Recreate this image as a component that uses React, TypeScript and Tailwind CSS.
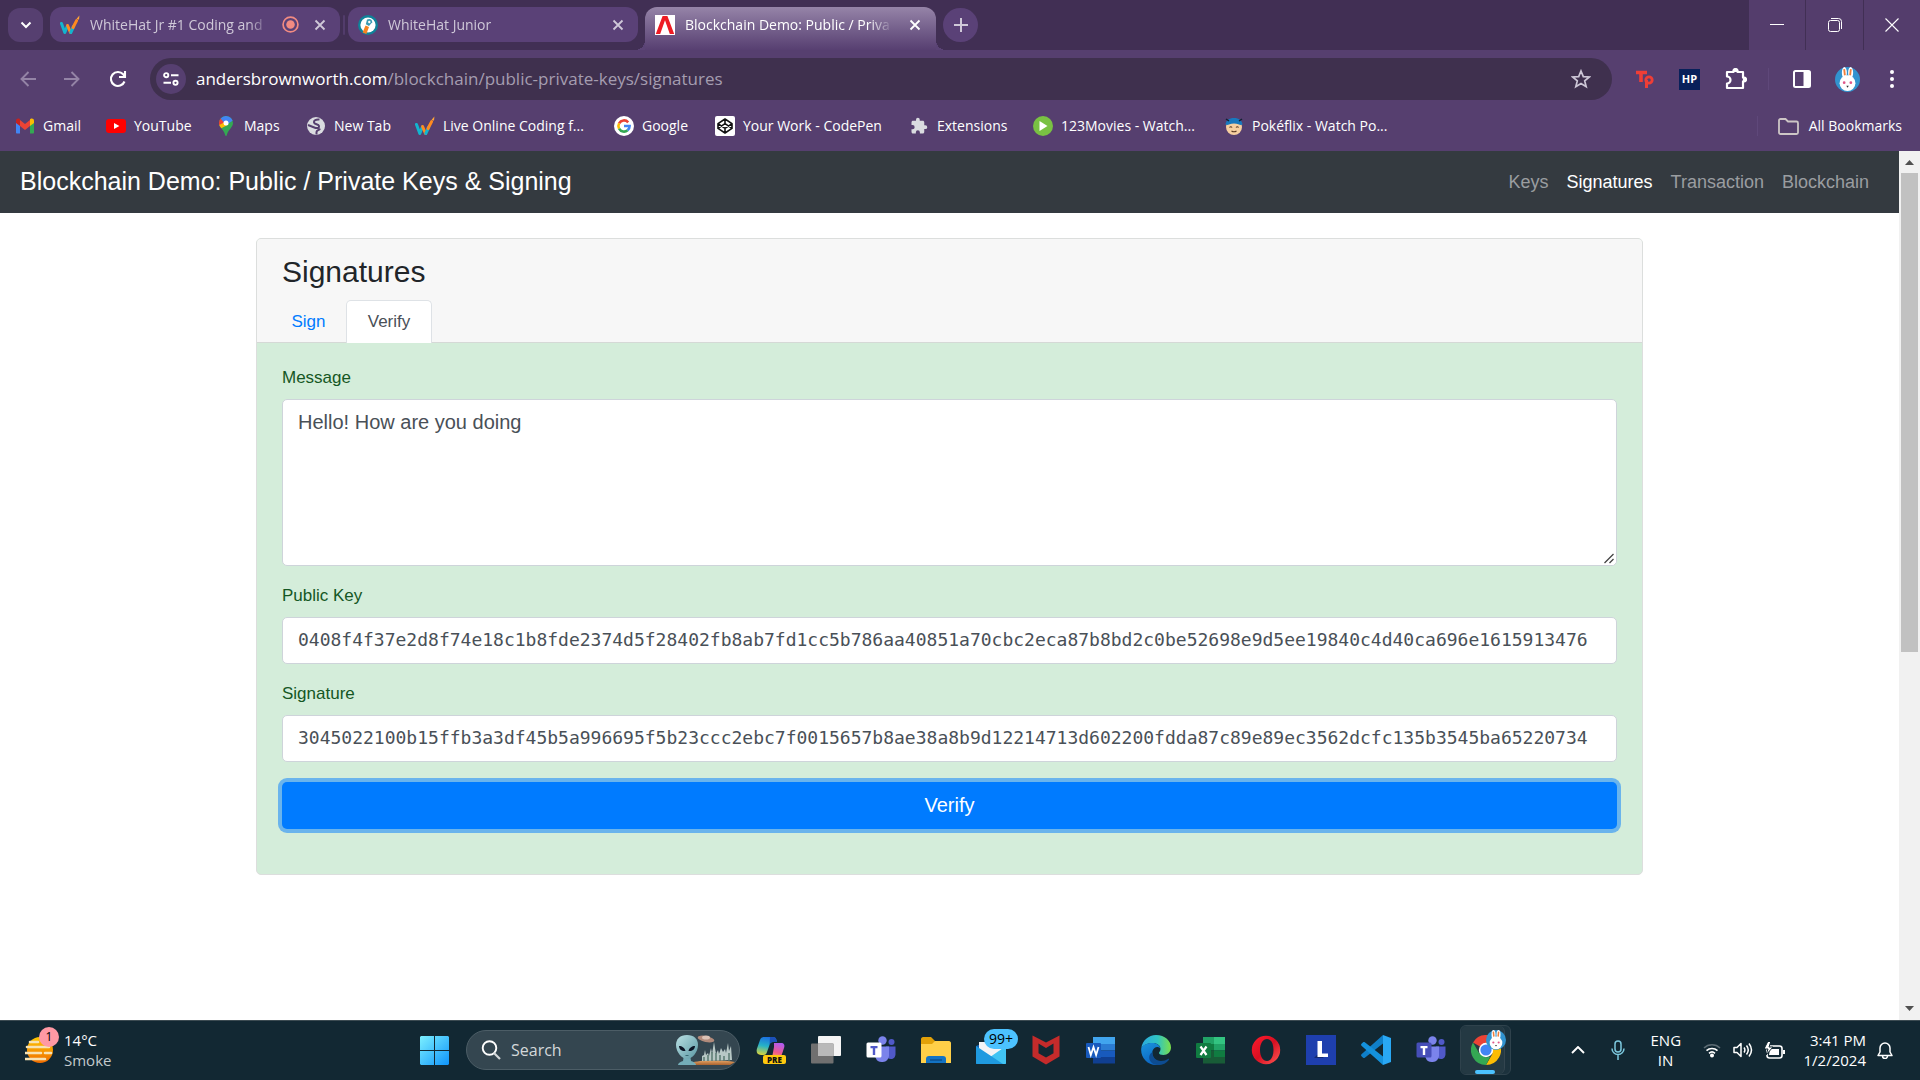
import React, { useState } from "react";

type IconProps = { className?: string };

/* ---------- Browser icons ---------- */

const WhiteHatMark = ({ className = "" }: IconProps) => (
  <svg viewBox="0 0 20 20" className={className} aria-hidden="true">
    <path d="M1.5 8.5 4.8 17.5 7.4 11" fill="none" stroke="#12b5cf" strokeWidth="3" strokeLinejoin="round" strokeLinecap="round" />
    <path d="M7.6 10.5 10.5 17.5" fill="none" stroke="#ff8a1f" strokeWidth="3" strokeLinecap="round" />
    <path d="M10.8 17.5 13.8 11" fill="none" stroke="#12b5cf" strokeWidth="3" strokeLinecap="round" />
    <path d="M13 12.5 16.6 5.6" fill="none" stroke="#ff8a1f" strokeWidth="3" strokeLinecap="round" />
    <path d="M16.6 3.8 19.4 0.4 19 4.8z" fill="#ffa53a" />
  </svg>
);

const WhiteHatRound = ({ className = "" }: IconProps) => (
  <svg viewBox="0 0 20 20" className={className} aria-hidden="true">
    <circle cx="10" cy="10" r="10" fill="#0f8299" />
    <circle cx="10" cy="10" r="7.6" fill="#fff" />
    <path d="M9 4.5c3-1.500 5.400 0 5.200 2.800L11 11 7.800 9.200z" fill="#3b9bb3" />
    <path d="M7.500 10.500 11 12 8.400 19 4.600 17.600z" fill="#f58220" />
    <circle cx="11.300" cy="7" r="1.200" fill="#fff" />
  </svg>
);

const AMark = ({ className = "" }: IconProps) => (
  <svg viewBox="0 0 20 20" className={className} aria-hidden="true">
    <path d="M0 0h20v20H0z" fill="#fff" />
    <path d="M.8 19 7.600 1h4.800l6.800 18h-4.400L10 5.200 5.200 19z" fill="#ed1c24" />
  </svg>
);

const Recording = ({ className = "" }: IconProps) => (
  <svg viewBox="0 0 16 16" className={className} aria-hidden="true">
    <circle cx="8" cy="8" r="7" fill="none" stroke="#f28b82" strokeWidth="1.600" />
    <circle cx="8" cy="8" r="4" fill="#f28b82" />
  </svg>
);

const Cross = ({ className = "" }: IconProps) => (
  <svg viewBox="0 0 12 12" className={className} aria-hidden="true">
    <path d="m1.500 1.500 9 9m0-9-9 9" stroke="currentColor" strokeWidth="1.800" fill="none" />
  </svg>
);

const Gmail = () => (
  <svg viewBox="0 0 20 16" className="h-4 w-5" aria-hidden="true">
    <path d="M1 3v11.500c0 .6.5 1 1 1h3V7z" fill="#4285f4" />
    <path d="M19 3v11.500c0 .6-.5 1-1 1h-3V7z" fill="#34a853" />
    <path d="M5 2v6l5 4 5-4V2l-5 4z" fill="#ea4335" />
    <path d="M1 2.500C1 .6 3.300-.2 4.600.9L5 1.300V8L1 5z" fill="#c5221f" />
    <path d="M19 2.500C19 .6 16.700-.2 15.400.9L15 1.300V8l4-3z" fill="#fbbc04" />
  </svg>
);

const YouTube = () => (
  <svg viewBox="0 0 20 14" className="h-[14px] w-5" aria-hidden="true">
    <rect width="20" height="14" rx="3" fill="#f00" />
    <path d="m8 4 5.400 3L8 10z" fill="#fff" />
  </svg>
);

const Maps = () => (
  <svg viewBox="0 0 14 20" className="h-5 w-[14px]" aria-hidden="true">
    <path d="M7 0a7 7 0 0 1 7 7c0 4.500-5 6.500-6.200 12.300-.2.900-1.400.9-1.600 0C5 13.500 0 11.500 0 7a7 7 0 0 1 7-7z" fill="#34a853" />
    <path d="M0 7a7 7 0 0 0 2.300 5.200L9.500 8.500 4 3z" fill="#fbbc04" />
    <path d="M1.600 2.600A7 7 0 0 0 .3 9L6 6z" fill="#ea4335" />
    <path d="M1.600 2.600A7 7 0 0 1 13.600 4.700L7 9 4.500 6z" fill="#4285f4" />
    <circle cx="7" cy="7" r="2.500" fill="#fff" />
  </svg>
);

const Globe = () => (
  <svg viewBox="0 0 20 20" className="h-5 w-5" aria-hidden="true">
    <circle cx="10" cy="10" r="9" fill="#dadce0" />
    <path d="M13.500 3.500C10 3 7.500 4.500 8 6.500s4.500 1.500 5 3.500-1.500 2.200-3.500 2L2 9M14 12.500c-1 2-3 1.500-3.500 3.500v2.500" fill="none" stroke="#563f6f" strokeWidth="2" />
  </svg>
);

const GoogleG = () => (
  <svg viewBox="0 0 20 20" className="h-5 w-5" aria-hidden="true">
    <circle cx="10" cy="10" r="10" fill="#fff" />
    <g fill="none" strokeWidth="2.600">
      <path d="M14.200 6.300A5.600 5.600 0 0 0 5.100 7.300" stroke="#ea4335" />
      <path d="M5.100 7.300a5.600 5.600 0 0 0 0 5.400" stroke="#fbbc05" />
      <path d="M5.100 12.700a5.600 5.600 0 0 0 8.500 1.600" stroke="#34a853" />
      <path d="M13.600 14.300A5.600 5.600 0 0 0 15.600 10H10" stroke="#4285f4" />
    </g>
  </svg>
);

const CodePen = () => (
  <svg viewBox="0 0 20 20" className="h-5 w-5" aria-hidden="true">
    <rect width="20" height="20" rx="2" fill="#fff" />
    <path d="M10 3 17 7.600v4.800L10 17l-7-4.600V7.600zM3 7.600l7 4.700 7-4.700M3 12.400l7-4.700 7 4.700M10 3v4.700M10 12.300V17" fill="none" stroke="#111" strokeWidth="1.600" strokeLinejoin="round" />
  </svg>
);

const Puzzle = ({ className = "" }: IconProps) => (
  <svg viewBox="0 0 24 24" className={className} aria-hidden="true">
    <path d="M20.500 11H19V7c0-1.100-.9-2-2-2h-4V3.500a2.500 2.500 0 0 0-5 0V5H4c-1.100 0-2 .9-2 2v3.800h1.500a2.700 2.700 0 0 1 0 5.400H2V20c0 1.100.9 2 2 2h3.800v-1.500a2.700 2.700 0 0 1 5.400 0V22H17c1.100 0 2-.9 2-2v-4h1.500a2.500 2.500 0 0 0 0-5z" fill="#dadce0" />
  </svg>
);

const PlayBadge = () => (
  <svg viewBox="0 0 20 20" className="h-5 w-5" aria-hidden="true">
    <circle cx="10" cy="10" r="10" fill="#79c143" />
    <path d="m6.500 5 8 5-8 5z" fill="#fff" />
  </svg>
);

const PokeFace = () => (
  <svg viewBox="0 0 20 20" className="h-5 w-5" aria-hidden="true">
    <circle cx="10" cy="11" r="8" fill="#f6cfa0" />
    <path d="M1.500 8.500C2 4.500 5 2 10 2s8 2.500 8.500 6.500C16 10 15 7.500 10 7.500S4 10 1.500 8.500z" fill="#1878be" />
    <path d="M2 3l3 2M18 3l-3 2" stroke="#112233" strokeWidth="1.500" />
    <path d="M5.500 11.500q1.300-1.500 2.600 0M12 11.500q1.300-1.500 2.600 0M7.500 15q2.500 1.500 5 0" fill="none" stroke="#5b3a22" strokeWidth="1.100" />
  </svg>
);

const Rabbit = ({ className = "" }: IconProps) => (
  <svg viewBox="0 0 24 24" className={className} aria-hidden="true">
    <circle cx="12" cy="12" r="12" fill="#3193cf" />
    <ellipse cx="9" cy="5.500" rx="2.400" ry="5.500" fill="#fff" />
    <ellipse cx="15" cy="5.500" rx="2.400" ry="5.500" fill="#fff" />
    <path d="M8.800 2 9.500 8M15.200 2 14.500 8" stroke="#f07f3c" strokeWidth="1.800" />
    <circle cx="12" cy="15.500" r="7.600" fill="#fff" />
    <circle cx="8.800" cy="15" r="1.300" fill="#e0588a" />
    <circle cx="15.200" cy="15" r="1.300" fill="#e0588a" />
    <path d="M10.800 18h2.400L12 19.800z" fill="#333" />
  </svg>
);

/* ---------- Browser chrome ---------- */

type TabProps = { title: string; icon: React.ReactNode; recording?: boolean };

const IdleTab = ({ title, icon, recording }: TabProps) => (
  <div className="flex h-[35px] w-[290px] items-center rounded-xl bg-[#5a4177] pr-3 pl-[10px]">
    {icon}
    <button className="ml-[10px] flex-1 overflow-hidden pt-px text-left whitespace-nowrap [mask-image:linear-gradient(to_right,#000_88%,transparent)]">
      {title}
    </button>
    {recording && <Recording className="mr-[13px] ml-3 h-[17px] w-[17px] shrink-0" />}
    <button aria-label={`Close ${title}`} className="flex h-4 w-4 items-center justify-center">
      <Cross className="h-3 w-3" />
    </button>
  </div>
);

const TabStrip = () => (
  <div className="flex h-[50px] bg-[#412f54] text-sm text-[#cfc8d8]">
    <button aria-label="Search tabs" className="mt-2 ml-2 flex h-[34px] w-[35px] items-center justify-center rounded-xl bg-[#563f70]">
      <svg viewBox="0 0 12 12" className="h-3 w-3"><path d="m1.500 3.500 4.500 4.500 4.500-4.500" fill="none" stroke="#fff" strokeWidth="2" /></svg>
    </button>
    <div className="mt-[7px] ml-[7px] flex">
      <IdleTab title="WhiteHat Jr #1 Coding and" icon={<WhiteHatMark className="h-5 w-5 shrink-0" />} recording />
      <span className="mx-[3px] mt-2 h-5 w-[2px] rounded bg-[#523c6b]" />
      <IdleTab title="WhiteHat Junior" icon={<WhiteHatRound className="h-5 w-5 shrink-0" />} />
    </div>
    <div className="mt-[7px] flex">
      <span className="mt-[33px] ml-[-3px] h-[10px] w-[10px] bg-[radial-gradient(circle_at_0_0,transparent_10px,#5a4375_10px)]" />
      <div className="flex h-[43px] w-[291px] rounded-t-xl bg-linear-to-b from-[#9684a8] to-[#573f71] pr-[13px] pl-[10px] text-white">
        <AMark className="mt-2 h-5 w-5 shrink-0" />
        <button className="ml-[10px] h-[35px] w-[208px] overflow-hidden pt-px text-left whitespace-nowrap [mask-image:linear-gradient(to_right,#000_88%,transparent)]">
          Blockchain Demo: Public / Priva
        </button>
        <button aria-label="Close tab" className="ml-auto flex h-[35px] w-4 items-center justify-center">
          <Cross className="h-3 w-3" />
        </button>
      </div>
      <span className="mt-[33px] h-[10px] w-[10px] bg-[radial-gradient(circle_at_100%_0,transparent_10px,#5a4375_10px)]" />
    </div>
    <button aria-label="New tab" className="mt-2 ml-[-3px] flex h-[34px] w-[35px] items-center justify-center rounded-full bg-[#5a4177]">
      <svg viewBox="0 0 14 14" className="h-[14px] w-[14px]"><path d="M7 0v14M0 7h14" stroke="currentColor" strokeWidth="2" /></svg>
    </button>
    <div className="ml-auto flex gap-px text-white">
      <button aria-label="Minimize" className="flex w-14 items-center justify-center bg-[#543d6c]">
        <svg viewBox="0 0 14 14" className="h-[14px] w-[14px]"><path d="M0 6.500h14" stroke="currentColor" /></svg>
      </button>
      <button aria-label="Restore" className="flex w-[57px] items-center justify-center bg-[#543d6c]">
        <svg viewBox="0 0 14 14" className="h-[14px] w-[14px]" fill="none" stroke="currentColor"><rect x=".5" y="2.500" width="11" height="11" rx="2" /><path d="M3 .5h7.500a3 3 0 0 1 3 3V11" /></svg>
      </button>
      <button aria-label="Close" className="flex w-14 items-center justify-center bg-[#543d6c]">
        <svg viewBox="0 0 14 14" className="h-[14px] w-[14px]"><path d="m.5.5 13 13m0-13-13 13" stroke="currentColor" strokeWidth="1.100" /></svg>
      </button>
    </div>
  </div>
);

const Arrow = ({ flip = false }: { flip?: boolean }) => (
  <svg viewBox="0 0 16 16" className={flip ? "h-4 w-4 rotate-180" : "h-4 w-4"} aria-hidden="true">
    <path d="M16 8H2M8.500 1 1.500 8l7 7" fill="none" stroke="#9484a6" strokeWidth="1.900" />
  </svg>
);

const Toolbar = () => (
  <div className="flex h-[58px] items-center">
    <button aria-label="Back" className="ml-[6px] flex h-8 w-11 items-center justify-center"><Arrow /></button>
    <button aria-label="Forward" className="flex h-8 w-11 items-center justify-center"><Arrow flip /></button>
    <button aria-label="Reload" className="flex h-8 w-12 items-center justify-center">
      <svg viewBox="0 0 18 18" className="h-[18px] w-[18px]" fill="none" stroke="#fff" strokeWidth="2.100">
        <path d="M15.500 11.500A7 7 0 1 1 14.200 4.300L16 6.500" /><path d="M16 1v6h-6" />
      </svg>
    </button>
    <div className="ml-2 flex h-[42px] flex-1 items-center rounded-full bg-[#3f304e] pr-[21px] pl-[6px]">
      <button aria-label="View site information" className="flex h-[30px] w-[30px] items-center justify-center rounded-full bg-[#563f70]">
        <svg viewBox="0 0 16 14" className="h-[14px] w-4" fill="none" stroke="#fff" strokeWidth="1.900">
          <circle cx="3.200" cy="3.200" r="2.100" /><path d="M8 3.200h7.500M.5 10.800H8" /><circle cx="12.500" cy="10.800" r="2.100" />
        </svg>
      </button>
      <p className="ml-[10px] flex-1 text-[17px] whitespace-nowrap text-[#a59db0]">
        <span className="text-white">andersbrownworth.com</span>/blockchain/public-private-keys/signatures
      </p>
      <button aria-label="Bookmark this tab">
        <svg viewBox="0 0 20 20" className="h-5 w-5"><path d="m10 2 2.300 5.600 6 .4-4.600 3.900 1.500 5.900L10 14.600l-5.200 3.200 1.500-5.900L1.700 8l6-.4z" fill="none" stroke="#cdc6d6" strokeWidth="1.700" /></svg>
      </button>
    </div>
    <div className="ml-[22px] flex items-center">
      <button aria-label="Toucan" className="w-[45px] pl-px">
        <svg viewBox="0 0 20 20" className="h-5 w-5" fill="none" stroke="#ef3e36"><path d="M1 3.500h11M6 3v10" strokeWidth="3.600" /><circle cx="14" cy="11" r="3.200" strokeWidth="2.800" /><path d="M11.500 11v8" strokeWidth="3" /></svg>
      </button>
      <button aria-label="HP" className="mr-[25px] flex h-[21px] w-[21px] items-center justify-center bg-[#08205a] text-[11px] font-bold text-white">HP</button>
      <button aria-label="Extensions">
        <svg viewBox="0 0 22 22" className="h-[22px] w-[22px]" fill="none" stroke="#fff" strokeWidth="2.200" strokeLinejoin="round"><path d="M2 4h6.500a2 2 0 0 1 4 0H18v5.500a2.200 2.200 0 0 1 0 4V20H2v-4.500a3.500 3.500 0 0 0 0-7z" /><path d="M8.500 3a2 2 0 0 1 4 0zM19 9.500a2 2 0 0 1 0 4z" fill="#fff" /></svg>
      </button>
      <span className="ml-[21px] h-[22px] w-px bg-[#5f487a]" />
      <button aria-label="Side panel" className="ml-6">
        <svg viewBox="0 0 18 18" className="h-[18px] w-[18px]"><rect x="1" y="1" width="16" height="16" rx="1.500" fill="none" stroke="#fff" strokeWidth="2" /><path d="M10.500 1H17v16h-6.500z" fill="#fff" /></svg>
      </button>
      <button aria-label="Profile" className="ml-6"><Rabbit className="h-[25px] w-[25px]" /></button>
      <button aria-label="Menu" className="mr-[26px] ml-[30px]">
        <svg viewBox="0 0 4 18" className="h-[18px] w-1" fill="#fff"><circle cx="2" cy="2" r="2" /><circle cx="2" cy="9" r="2" /><circle cx="2" cy="16" r="2" /></svg>
      </button>
    </div>
  </div>
);

const Bookmark = ({ label, icon, className }: { label: string; icon: React.ReactNode; className: string }) => (
  <a href="#bookmark" className={`flex shrink-0 items-center gap-2 whitespace-nowrap ${className}`}>
    <span className="flex w-5 justify-center">{icon}</span>
    {label}
  </a>
);

const Bookmarks = () => (
  <nav aria-label="Bookmarks" className="flex h-[43px] items-center pb-[7px] pl-[15px] text-sm text-white">
    <Bookmark label="Gmail" icon={<Gmail />} className="w-[91px]" />
    <Bookmark label="YouTube" icon={<YouTube />} className="w-[110px]" />
    <Bookmark label="Maps" icon={<Maps />} className="w-[90px]" />
    <Bookmark label="New Tab" icon={<Globe />} className="w-[109px]" />
    <Bookmark label="Live Online Coding f..." icon={<WhiteHatMark className="h-5 w-5" />} className="w-[199px]" />
    <Bookmark label="Google" icon={<GoogleG />} className="w-[101px]" />
    <Bookmark label="Your Work - CodePen" icon={<CodePen />} className="w-[194px]" />
    <Bookmark label="Extensions" icon={<Puzzle className="h-[18px] w-[18px]" />} className="w-[124px]" />
    <Bookmark label="123Movies - Watch..." icon={<PlayBadge />} className="w-[191px]" />
    <Bookmark label="Pokéflix - Watch Po..." icon={<PokeFace />} className="" />
    <span className="ml-auto h-5 w-px bg-[#5f487a]" />
    <button className="mr-[18px] ml-5 flex items-center gap-[10px]">
      <svg viewBox="0 0 21 17" className="h-[17px] w-[21px]"><path d="M1 2.500C1 1.700 1.700 1 2.500 1h5l2.500 2.500h8.500c.8 0 1.500.7 1.500 1.500v9.500c0 .8-.7 1.500-1.500 1.500h-16C1.700 16 1 15.300 1 14.500z" fill="none" stroke="#cdc6c6" strokeWidth="1.800" /></svg>
      All Bookmarks
    </button>
  </nav>
);

/* ---------- Web page ---------- */

const navLinks = ["Keys", "Signatures", "Transaction", "Blockchain"];

const PageNav = () => (
  <header className="flex h-[62px] items-center justify-between bg-[#343a40] pr-[30px] pl-5">
    <a href="#home" className="text-[25px] text-white">Blockchain Demo: Public / Private Keys &amp; Signing</a>
    <nav className="flex gap-[18px] text-lg">
      {navLinks.map((l) => (
        <a key={l} href={`#${l}`} className={l === "Signatures" ? "text-white" : "text-[#9a9da0]"}>{l}</a>
      ))}
    </nav>
  </header>
);

const fieldClass = "block w-full rounded-[5px] border border-[#ced4da] bg-white px-[15px] text-[#495057] outline-none";
const labelClass = "mb-2 block text-[17px] leading-[26px] text-[#155724]";

const SignatureCard = () => {
  const [message, setMessage] = useState("Hello! How are you doing");
  const [publicKey, setPublicKey] = useState(
    "0408f4f37e2d8f74e18c1b8fde2374d5f28402fb8ab7fd1cc5b786aa40851a70cbc2eca87b8bd2c0be52698e9d5ee19840c4d40ca696e1615913476"
  );
  const [signature, setSignature] = useState(
    "3045022100b15ffb3a3df45b5a996695f5b23ccc2ebc7f0015657b8ae38a8b9d12214713d602200fdda87c89e89ec3562dcfc135b3545ba65220734"
  );
  return (
    <section className="mx-auto mt-[25px] w-full max-w-[1387px] overflow-hidden rounded-[5px] border border-[#dcdedd] bg-[#d4edda]">
      <div className="border-b border-[#d5d9d6] bg-[#f7f7f7] px-[25px] pt-[15px]">
        <h1 className="text-[30px] leading-9 text-[#212529]">Signatures</h1>
        <div role="tablist" className="mt-[10px] -mb-px ml-[-11px] flex text-[17px] leading-[26px]">
          <button role="tab" aria-selected="false" className="h-[43px] w-[75px] text-[#007bff]">Sign</button>
          <button role="tab" aria-selected="true" className="h-[43px] w-[86px] rounded-t-[5px] border border-b-0 border-[#dee2e6] bg-white text-[#495057]">Verify</button>
        </div>
      </div>
      <form className="px-[25px] pt-[22px] pb-[45px]" onSubmit={(e) => e.preventDefault()}>
        <label htmlFor="message" className={labelClass}>Message</label>
        <div className="relative">
          <textarea id="message" value={message} onChange={(e) => setMessage(e.target.value)} className={`${fieldClass} h-[167px] resize-y py-[7px] text-xl leading-[30px]`} />
          <svg viewBox="0 0 13 13" className="pointer-events-none absolute right-px bottom-px h-[13px] w-[13px]" aria-hidden="true">
            <path d="M0 0h13v10l-3 3H0z" fill="#fff" />
            <path d="m1.500 11 9-9M6.500 11 10.500 7" stroke="#444" strokeWidth="1.300" />
          </svg>
        </div>
        <label htmlFor="pubkey" className={`${labelClass} mt-[17px]`}>Public Key</label>
        <input id="pubkey" type="text" value={publicKey} onChange={(e) => setPublicKey(e.target.value)} className={`${fieldClass} h-[47px] pb-[2px] font-['DejaVu_Sans_Mono',monospace] text-lg`} />
        <label htmlFor="signature" className={`${labelClass} mt-[17px]`}>Signature</label>
        <input id="signature" type="text" value={signature} onChange={(e) => setSignature(e.target.value)} className={`${fieldClass} h-[47px] pb-[2px] font-['DejaVu_Sans_Mono',monospace] text-lg`} />
        <button type="submit" className="mt-5 block h-[47px] w-full rounded-[5px] bg-[#007bff] pb-[2px] text-xl text-white ring-4 ring-[#6ab4ec]">Verify</button>
      </form>
    </section>
  );
};

const Scrollbar = () => (
  <div aria-hidden="true" className="flex w-[21px] shrink-0 flex-col items-center bg-[#f1f1f1]">
    <svg viewBox="0 0 21 22" className="h-[22px] w-[21px]"><path d="m6 14 4.500-5L15 14z" fill="#505050" /></svg>
    <div className="h-[479px] w-[17px] bg-[#c1c1c1]" />
    <svg viewBox="0 0 21 22" className="mt-auto h-[22px] w-[21px]"><path d="m6 8 4.500 5L15 8z" fill="#505050" /></svg>
  </div>
);

/* ---------- Taskbar ---------- */

const Alien = () => (
  <svg viewBox="0 0 60 32" className="h-8 w-[60px]" aria-hidden="true">
    <defs>
      <linearGradient id="skin" x1="0" x2="1" y2="1"><stop stopColor="#b9e0e3" /><stop offset="1" stopColor="#5b98a4" /></linearGradient>
      <linearGradient id="ground" x1="0" x2="0" y2="1"><stop stopColor="#e3a264" /><stop offset="1" stopColor="#a8622f" /></linearGradient>
    </defs>
    <path d="M16 29c8-3 30-3 44-1l-5 3H14z" fill="url(#ground)" />
    <path d="M27 27v-5l2-1 1-5 1 5 2-2 1 3 2-8 1 6 2-12 2 12 2-4 1 4 2-6 2 4 2-3 1 4 2-10 1 8 2-5 1 14z" fill="#b8c8c6" />
    <path d="M29 27v-4M33 27v-6M37 27v-9M41 27v-8M45 27v-6M49 27v-5M54 27v-8" stroke="#5a7a72" strokeWidth="1.500" />
    <ellipse cx="31" cy="5" rx="8.500" ry="3" fill="#b18a7b" transform="rotate(12 31 5)" />
    <ellipse cx="31" cy="3.500" rx="4" ry="2" fill="#dbc2b5" />
    <path d="M9 21h6l1 6c3 1 5 2 5 4H3c0-2 2-3 5-4z" fill="#74adb8" />
    <path d="M12 1c7 0 11 4 11 10 0 7-6 14-11 14S1 18 1 11C1 5 5 1 12 1z" fill="url(#skin)" />
    <path d="M4 12c3 0 6 2 6.500 5C7 17.500 4 15.500 4 12zM20 12c-3 0-6 2-6.500 5 3.500.5 6.500-1.500 6.500-5z" fill="#0c1526" />
    <path d="M10.500 21.500h3" stroke="#396a75" />
  </svg>
);

const Copilot = () => (
  <svg viewBox="0 0 30 30" className="h-[30px] w-[30px]" aria-hidden="true">
    <defs>
      <linearGradient id="cpa" x1="0.500" x2="0.300" y2="1"><stop stopColor="#1b6fe0" /><stop offset=".5" stopColor="#26b2c8" /><stop offset="1" stopColor="#d9d33b" /></linearGradient>
      <linearGradient id="cpb" x1="0.600" x2="0.300" y2="1"><stop stopColor="#b15bf0" /><stop offset=".6" stopColor="#f0598c" /><stop offset="1" stopColor="#ffa35c" /></linearGradient>
    </defs>
    <path d="M8 2h9c2 0 3 1 3.500 3L21 7h-4c-2 0-3 1-3.500 3L11 17c-.5 2-1.500 3-3.500 3H5c-4 0-5-3-4-6.500L4 5c.6-2 2-3 4-3z" fill="url(#cpa)" />
    <path d="M14 2h3c2 0 3 1 3.500 3L21 7h-4c-2 0-3 1-3.500 3z" fill="#1c50b8" />
    <path d="M18 8h7c3 0 4 2 3 5l-2 6c-1 3-3 4-5 4h-8c2 0 3-1 3.500-3L18 12z" fill="url(#cpb)" />
    <rect x="7" y="20" width="23" height="9" rx="2" fill="#ffc90e" />
    <text x="18.500" y="27.500" fontSize="8" fontWeight="800" textAnchor="middle" fill="#111" fontFamily="Open Sans, sans-serif">PRE</text>
  </svg>
);

const TaskView = () => (
  <svg viewBox="0 0 30 28" className="h-7 w-[30px]" aria-hidden="true">
    <rect x="7" width="23" height="20" rx="1" fill="#f4f4f4" />
    <rect y="7.500" width="22.500" height="20" rx="1" fill="#707070" />
    <path d="M7 7.500h15.500V20H7z" fill="#b9b9b9" />
  </svg>
);

const TeamsIcon = ({ light = false }: { light?: boolean }) => (
  <svg viewBox="0 0 30 28" className="h-7 w-[30px]" aria-hidden="true">
    <circle cx="25.500" cy="6" r="3" fill="#5059c9" />
    <path d="M20 10.500h9.500V18c0 3-2 5-4.500 5s-4-1-5-3z" fill="#5059c9" />
    <circle cx="16.500" cy="4.500" r="4.200" fill="#7b83eb" />
    <path d="M9.500 10.500H23V20a7 7 0 0 1-13.500 1.500z" fill="#7b83eb" />
    <rect x="0.500" y="6.500" width="15" height="15" rx="1.500" fill={light ? "#fff" : "#464eb8"} />
    <path d="M4.500 10h7v2.200H9.200V19H6.800v-6.800H4.500z" fill={light ? "#5059c9" : "#fff"} />
  </svg>
);

const Explorer = () => (
  <svg viewBox="0 0 30 28" className="h-7 w-[30px]" aria-hidden="true">
    <path d="M0 3c0-1 1-2 2-2h8l4 4h14v8H0z" fill="#e2a109" />
    <path d="M0 8h11l3-3h14c1 0 2 1 2 2v20H0z" fill="#ffcf48" />
    <path d="M5 27v-4c0-2 1-3 3-3h14c2 0 3 1 3 3v4z" fill="#1373c4" />
    <path d="M9 24h12" stroke="#0b4f91" strokeWidth="1.500" />
  </svg>
);

const Mail = () => (
  <svg viewBox="0 0 30 24" className="h-6 w-[30px]" aria-hidden="true">
    <path d="M0 6 15 0l15 6v17c0 .6-.4 1-1 1H1c-.6 0-1-.4-1-1z" fill="#1464b4" />
    <path d="M3 2h24v8l-12 7L3 9z" fill="#f3f3f5" />
    <path d="M30 6v17c0 .6-.4 1-1 1H4z" fill="#41c4f3" />
    <path d="m0 6 27 18H1c-.6 0-1-.4-1-1z" fill="#1f9ae0" />
  </svg>
);

const McAfee = () => (
  <svg viewBox="0 0 28 30" className="h-[30px] w-7" aria-hidden="true">
    <path d="m.5.5 13.500 7 13.500-7v21L14 29.500.5 21.500zM6.500 8.500v9.700l7.500 4.300 7.500-4.300V8.500L14 13z" fill="#c52b2b" fillRule="evenodd" />
  </svg>
);

const Word = () => (
  <svg viewBox="0 0 30 28" className="h-7 w-[30px]" aria-hidden="true">
    <path d="M7 1h22v7H7z" fill="#41a5ee" /><path d="M7 8h22v6.500H7z" fill="#2b7cd3" /><path d="M7 14.500h22V21H7z" fill="#185abd" /><path d="M7 21h22v6.500H7z" fill="#103f91" />
    <rect y="7" width="15" height="15" rx="1" fill="#185abd" />
    <path d="m2.500 11 2.300 8 2.700-8 2.600 8 2.400-8" fill="none" stroke="#fff" strokeWidth="1.800" />
  </svg>
);

const Excel = () => (
  <svg viewBox="0 0 30 28" className="h-7 w-[30px]" aria-hidden="true">
    <path d="M7 1h11v7H7z" fill="#21a366" /><path d="M18 1h11v7H18z" fill="#33c481" /><path d="M7 8h11v6.500H7z" fill="#107c41" /><path d="M18 8h11v6.500H18z" fill="#21a366" /><path d="M7 14.500h11V21H7z" fill="#185c37" /><path d="M18 14.500h11V21H18z" fill="#107c41" /><path d="M7 21h22v6.500H7z" fill="#185c37" />
    <rect y="7" width="15" height="15" rx="1" fill="#107c41" />
    <path d="m4.500 10.500 6 8.500m0-8.500-6 8.500" stroke="#fff" strokeWidth="2.200" />
  </svg>
);

const Edge = () => (
  <svg viewBox="0 0 30 30" className="h-[30px] w-[30px]" aria-hidden="true">
    <defs>
      <linearGradient id="ea" x1="0" x2="1"><stop stopColor="#2aa9e0" /><stop offset=".55" stopColor="#30c4c2" /><stop offset="1" stopColor="#7be04a" /></linearGradient>
      <linearGradient id="eb" x1="0" x2="0.500" y2="1"><stop stopColor="#1a94dd" /><stop offset="1" stopColor="#0b63c0" /></linearGradient>
    </defs>
    <path d="M.3 13C1.500 5.500 7.500 0 15 0c9 0 15 6 15 12.500 0 4.500-3.500 7.500-7.500 7.500-3 0-4.500-1-4.500-2s1.500-1.500 1.500-4c0-3.500-3.500-6-7.500-6C7 8 2.500 10 .3 13z" fill="url(#ea)" />
    <path d="M.3 13C2 10 6.500 8 11.500 8c4.500 0 7.500 2.500 8 5.500C18 12 15.500 11.500 13.500 13c-3.500 2.700-3 9 2 12.500 2.500 1.700 5 2 7 2C20 29.300 17.700 30 15 30 6 30-.9 22 .3 13z" fill="url(#eb)" />
    <path d="M11.500 17c-.5 5 3.500 9 8.500 9 3 0 5-1 7-2 .8-.4 1.300.2.8 1C25.500 28 22 30 17 30c-6 0-10-5-8.500-9.500.5-1.500 1.500-2.700 3-3.500z" fill="#0d4c91" />
  </svg>
);

const Opera = () => (
  <svg viewBox="0 0 30 30" className="h-[30px] w-[30px]" aria-hidden="true">
    <defs><linearGradient id="op" x1="0" x2="1" y2="1"><stop stopColor="#ff1b2d" /><stop offset=".5" stopColor="#d90f22" /><stop offset="1" stopColor="#ff5a55" /></linearGradient></defs>
    <path d="M15 .8a14.200 14.200 0 1 1 0 28.400A14.200 14.200 0 0 1 15 .8zm1 3.200c-4 0-7 4.500-7 11s3 11 7 11 6.500-4.500 6.500-11S20 4 16 4z" fill="url(#op)" fillRule="evenodd" />
  </svg>
);

const LetterTile = () => (
  <svg viewBox="0 0 30 30" className="h-[30px] w-[30px]" aria-hidden="true">
    <path d="M0 0h30v30H0z" fill="#1e3fae" />
    <path d="m8 23 3-3h8l-2 3z" fill="#14296f" />
    <path d="M11.500 6H16v12.500h6V22H11.500z" fill="#fff" />
  </svg>
);

const VSCode = () => (
  <svg viewBox="0 0 30 30" className="h-[30px] w-[30px]" aria-hidden="true">
    <path d="M22 0v8.500L3.800 22.800c-.5.400-1.200.4-1.700 0L.5 21.300c-.6-.6-.6-1.500 0-2z" fill="#0f7fc9" />
    <path d="M22 30v-8.500L3.800 7.200c-.5-.4-1.200-.4-1.700 0L.5 8.700c-.6.600-.6 1.500 0 2z" fill="#1491dc" />
    <path d="M22 0 30 3v24l-8 3z" fill="#29a8f5" />
  </svg>
);

const ChromeLogo = () => (
  <svg viewBox="0 0 30 30" className="h-[30px] w-[30px]" aria-hidden="true">
    <path d="M15 15 2 7.500A15 15 0 0 1 28 7.500H15z" fill="#ea4335" />
    <path d="M28 7.500A15 15 0 0 1 15 30l6.500-11.200L15 7.500z" fill="#fbbc04" />
    <path d="M15 30A15 15 0 0 1 2 7.500l6.500 11.200L15 22.500l4.300-.9z" fill="#34a853" />
    <circle cx="15" cy="15" r="7.200" fill="#fff" />
    <circle cx="15" cy="15" r="5.600" fill="#4285f4" />
  </svg>
);

const TaskApp = ({ label, children }: { label: string; children: React.ReactNode }) => (
  <button aria-label={label} className="relative flex h-[50px] w-[55px] items-center justify-center">{children}</button>
);

const Taskbar = () => (
  <footer className="flex h-[60px] shrink-0 items-center border-t border-[#3c4b52] bg-[#122833] pb-px text-white">
    <button className="flex w-[420px] items-center pl-[25px] text-left text-[15px] leading-5">
      <span className="relative mr-[9px] block h-[30px] w-[30px]">
        <svg viewBox="0 0 30 30" className="h-[30px] w-[30px]" aria-hidden="true">
          <defs><linearGradient id="sun" x1="0" x2="0" y2="1"><stop stopColor="#ffc800" /><stop offset="1" stopColor="#ef6c00" /></linearGradient></defs>
          <circle cx="15" cy="15" r="13" fill="url(#sun)" />
          <path d="M5 7h8M2 12h22M0 18h16M20 18h6M0 24h20" stroke="#f7e3b4" strokeWidth="2.600" strokeLinecap="round" />
        </svg>
        <span className="absolute -top-2 left-[14px] flex h-5 w-5 items-center justify-center rounded-full bg-[#ff99a4] text-xs text-black">1</span>
      </span>
      <span>14°C<br /><span className="text-[#c3cacd]">Smoke</span></span>
    </button>
    <button aria-label="Start" className="mr-[17px]">
      <svg viewBox="0 0 29 29" className="h-[29px] w-[29px]" aria-hidden="true">
        <defs><linearGradient id="win" x1="0" x2="1" y2="1"><stop stopColor="#7cf0ff" /><stop offset="1" stopColor="#0f94fb" /></linearGradient></defs>
        <path d="M1 0h13v14H0V1zM15 0h13l1 1v13H15zM0 15h14v14H1l-1-1zM15 15h14v13l-1 1H15z" fill="url(#win)" />
      </svg>
    </button>
    <label className="flex h-10 w-[274px] items-center rounded-full border border-[#4c5d66] bg-[#344650] pl-[14px]">
      <svg viewBox="0 0 20 20" className="h-5 w-5 shrink-0"><circle cx="8.500" cy="8" r="6.800" fill="none" stroke="#fff" strokeWidth="1.900" /><path d="m13 13 6 6" stroke="#d3d8da" strokeWidth="2.200" /></svg>
      <input type="text" aria-label="Search" placeholder="Search" className="ml-[10px] w-[150px] bg-transparent text-base outline-none placeholder:text-[#d3d8da]" />
      <span className="ml-[14px]"><Alien /></span>
    </label>
    <div className="ml-[3px] flex">
      <TaskApp label="Copilot"><Copilot /></TaskApp>
      <TaskApp label="Task view"><TaskView /></TaskApp>
      <TaskApp label="Chat"><TeamsIcon light /></TaskApp>
      <TaskApp label="File Explorer"><Explorer /></TaskApp>
      <TaskApp label="Mail">
        <span className="mt-1"><Mail /></span>
        <span className="absolute top-1 right-0 flex h-5 w-[34px] items-center justify-center rounded-full bg-[#4cc2ff] text-sm text-black">99+</span>
      </TaskApp>
      <TaskApp label="McAfee"><McAfee /></TaskApp>
      <TaskApp label="Word"><Word /></TaskApp>
      <TaskApp label="Edge"><Edge /></TaskApp>
      <TaskApp label="Excel"><Excel /></TaskApp>
      <TaskApp label="Opera"><Opera /></TaskApp>
      <TaskApp label="L"><LetterTile /></TaskApp>
      <TaskApp label="Visual Studio Code"><VSCode /></TaskApp>
      <TaskApp label="Teams"><TeamsIcon /></TaskApp>
      <div className="ml-[2px] rounded-md border border-[#2f424c] bg-[#1c323d] pr-[5px]">
        <button aria-label="Chrome" className="relative flex h-12 w-11 items-center justify-center rounded-md border-r border-[#33454f] bg-[#243943] pl-[6px]">
          <ChromeLogo />
          <Rabbit className="absolute top-1 left-[25px] h-5 w-5" />
          <span className="absolute bottom-0 left-[14px] h-1 w-5 rounded-full bg-[#4cc2ff]" />
        </button>
      </div>
    </div>
    <div className="ml-auto flex items-center pr-[27px]">
      <button aria-label="Hidden icons">
        <svg viewBox="0 0 14 8" className="h-2 w-[14px]"><path d="m1 7 6-6 6 6" fill="none" stroke="#fff" strokeWidth="1.900" /></svg>
      </button>
      <button aria-label="Microphone" className="ml-[26px]">
        <svg viewBox="0 0 14 20" className="h-5 w-[14px]" fill="none" stroke="#7cc8de" strokeWidth="1.500"><rect x="4" y="1" width="6" height="11" rx="3" /><path d="M1 8.500a6 6 0 0 0 12 0M7 14.500V20" /></svg>
      </button>
      <button className="ml-[26px] w-[30px] text-center text-[15px] leading-5">ENG<br />IN</button>
      <button aria-label="Network, volume, battery" className="ml-[22px] flex items-center gap-3">
        <svg viewBox="0 0 18 16" className="h-4 w-[18px]" fill="none" stroke="#fff" strokeWidth="1.600"><path d="M1 6a11.500 11.500 0 0 1 16 0" stroke="#5c6b73" /><path d="M3.500 8.700a8 8 0 0 1 11 0M6 11.300a4.500 4.500 0 0 1 6 0" /><circle cx="9" cy="13.500" r="1.200" fill="#fff" /></svg>
        <svg viewBox="0 0 20 16" className="h-4 w-5" fill="none" stroke="#fff" strokeWidth="1.500"><path d="M1 5.500h3l4-4v13l-4-4H1z" strokeLinejoin="round" /><path d="M11 5.500q1.800 2.500 0 5M13.500 3.500q3.500 4.500 0 9M16 1.500q5 6.500 0 13" /></svg>
        <svg viewBox="0 0 20 17" className="h-[17px] w-5"><rect x="2" y="4" width="15" height="12" rx="2.500" fill="none" stroke="#fff" strokeWidth="1.600" /><path d="M5 7h9v6H4zM18 8h2v4h-2z" fill="#fff" /><path d="M3-1-1 7h4L1 13l7-8H4l2-6z" fill="#fff" stroke="#122833" /></svg>
      </button>
      <button className="ml-[19px] flex items-center gap-[11px] text-right text-[15px] leading-5">
        <span>3:41 PM<br />1/2/2024</span>
        <svg viewBox="0 0 16 18" className="h-[18px] w-4" fill="none" stroke="#fff" strokeWidth="1.500"><path d="M3 7a5 5 0 0 1 10 0v4l2 3.500H1L3 11zM5.500 15a2.500 2.500 0 0 0 5 0" strokeLinejoin="round" /></svg>
      </button>
    </div>
  </footer>
);

export default function App() {
  return (
    <div className="flex min-h-screen flex-col bg-white font-['Open_Sans',sans-serif]">
      <TabStrip />
      <div className="bg-[#563f6f]">
        <Toolbar />
        <Bookmarks />
      </div>
      <div className="flex flex-1 font-['Liberation_Sans',Arial,sans-serif]">
        <main className="min-w-0 flex-1">
          <PageNav />
          <SignatureCard />
        </main>
        <Scrollbar />
      </div>
      <Taskbar />
    </div>
  );
}
